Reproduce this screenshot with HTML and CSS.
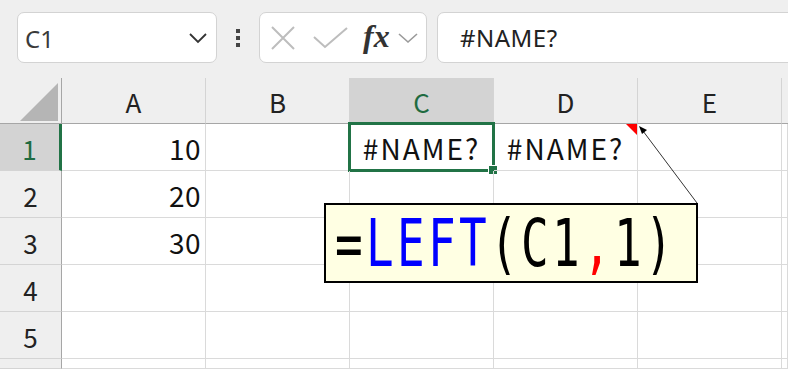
FILE: index.html
```html
<!DOCTYPE html>
<html>
	<head>
		<meta charset="UTF-8">
		<title>LEFT</title>
		<link rel="stylesheet" href="styles.css">
	</head>
	<body>
		<div class="toolbar">
			<div class="namebox">
				<span class="ref">C1</span>
				<svg class="chev" width="20" height="12" viewBox="0 0 20 12"><polyline points="2,2 10,10 18,2" fill="none" stroke="#333" stroke-width="1.8"/></svg>
			</div>
			<div class="dots"><i></i><i></i><i></i></div>
			<div class="fxbox">
				<svg class="ico-x" width="26" height="24" viewBox="0 0 26 24"><path d="M2 1 L24 23 M24 1 L2 23" stroke="#bdbdbd" stroke-width="2" fill="none"/></svg>
				<svg class="ico-ok" width="36" height="22" viewBox="0 0 36 22"><polyline points="1,10 12,20 34,1" stroke="#bdbdbd" stroke-width="2" fill="none"/></svg>
				<span class="fx">fx</span>
				<svg class="chev-s" width="20" height="11" viewBox="0 0 20 11"><polyline points="1,1 10,9 19,1" fill="none" stroke="#9a9a9a" stroke-width="1.6"/></svg>
			</div>
			<div class="formula">#NAME?</div>
		</div>

		<div class="sheet">
			<div class="corner"><svg width="40" height="40" viewBox="0 0 40 40"><polygon points="1,39 39,39 39,1" fill="#b5b5b5"/></svg></div>
			<div class="colhead">A</div>
			<div class="colhead">B</div>
			<div class="colhead active">C</div>
			<div class="colhead">D</div>
			<div class="colhead">E</div>
			<div class="colhead last"></div>

			<div class="rowhead active">1</div>
			<div class="cell num">10</div>
			<div class="cell"></div>
			<div class="cell err sel">#NAME?<span class="handle"></span></div>
			<div class="cell err note">#NAME?</div>
			<div class="cell"></div>
			<div class="cell"></div>

			<div class="rowhead">2</div>
			<div class="cell num">20</div>
			<div class="cell"></div>
			<div class="cell"></div>
			<div class="cell"></div>
			<div class="cell"></div>
			<div class="cell"></div>

			<div class="rowhead">3</div>
			<div class="cell num">30</div>
			<div class="cell"></div>
			<div class="cell"></div>
			<div class="cell"></div>
			<div class="cell"></div>
			<div class="cell"></div>

			<div class="rowhead">4</div>
			<div class="cell"></div>
			<div class="cell"></div>
			<div class="cell"></div>
			<div class="cell"></div>
			<div class="cell"></div>
			<div class="cell"></div>

			<div class="rowhead">5</div>
			<div class="cell"></div>
			<div class="cell"></div>
			<div class="cell"></div>
			<div class="cell"></div>
			<div class="cell"></div>
			<div class="cell"></div>

			<div class="rowhead"></div>
			<div class="cell"></div>
			<div class="cell"></div>
			<div class="cell"></div>
			<div class="cell"></div>
			<div class="cell"></div>
			<div class="cell"></div>
		</div>

		<!-- comment callout -->
		<svg class="arrow" width="788" height="369" viewBox="0 0 788 369">
			<line x1="697" y1="203" x2="643" y2="131" stroke="#333" stroke-width="1"/>
			<polygon points="639,126 647,130 642,134" fill="#000"/>
		</svg>
		<div class="callout">
			<span class="f-txt"><span class="k">=</span><span class="b">LEFT</span><span class="k">(C1</span><span class="r">,</span><span class="k">1)</span></span>
		</div>
	</body>
</html>
```

FILE: styles.css
```css
html,body{
	margin:0;
	padding:0;
}
body{
	width:788px;
	height:369px;
	overflow:hidden;
	background:#efefef;
	position:relative;
	font-family:"Noto Sans CJK JP","Noto Sans",sans-serif;
	color:#222;
}

/* formula bar */
.toolbar{
	height:78px;
	box-sizing:border-box;
	padding:12px 0 0 17px;
	display:flex;
	align-items:flex-start;
}
.namebox,.fxbox,.formula{
	height:51px;
	box-sizing:border-box;
	background:#fff;
	border:1px solid #d3d3d3;
	border-radius:7px;
	display:flex;
	align-items:center;
}
.namebox{
	width:200px;
	padding:0 8px 0 7px;
	justify-content:space-between;
}
.namebox .ref{
	font-family:"Noto Sans",sans-serif;
	font-size:24px;
	color:#3a3a3a;
	padding-top:2px;
}
.dots{
	width:42px;
	height:51px;
	display:flex;
	flex-direction:column;
	align-items:center;
	justify-content:center;
	gap:3px;
}
.dots i{
	display:block;
	width:4px;
	height:4px;
	background:#444;
}
.fxbox{
	width:168px;
	padding-left:10px;
}
.fxbox .ico-ok{
	margin-left:17px;
}
.fxbox .fx{
	font-family:"Liberation Serif",serif;
	font-style:italic;
	font-weight:bold;
	font-size:32px;
	color:#333;
	margin-left:14px;
	margin-top:-2px;
}
.fxbox .chev-s{
	margin-left:8px;
	margin-top:2px;
}
.formula{
	margin-left:10px;
	flex:1;
	margin-right:-30px;
	padding-left:22px;
	font-family:"Noto Sans",sans-serif;
	font-size:24px;
	color:#222;
	letter-spacing:0.5px;
}

/* grid */
.sheet{
	display:grid;
	grid-template-columns:62px 144px 144px 144px 144px 144px 1fr;
	grid-template-rows:46px 47px 47px 47px 47px 47px 10px;
	background:#fff;
}
.corner,.colhead,.rowhead{
	background:#efefef;
	box-sizing:border-box;
	display:flex;
	align-items:center;
	justify-content:center;
	font-size:26px;
	color:#222;
}
.corner{
	border-right:1px solid #a6a6a6;
	border-bottom:1px solid #a6a6a6;
	justify-content:flex-end;
	align-items:flex-end;
	padding:0 2px 1px 0;
}
.corner svg{
	display:block;
}
.colhead{
	border-right:1px solid #d4d4d4;
	border-bottom:1px solid #a6a6a6;
	padding-top:2px;
}
.colhead.last{
	border-right:none;
}
.rowhead{
	border-right:1px solid #a6a6a6;
	border-bottom:1px solid #d4d4d4;
	padding-top:2px;
}
.colhead.active,.rowhead.active{
	background:#d3d3d3;
	color:#1f6b41;
}
.rowhead.active{
	border-right:3px solid #217346;
}
.cell{
	box-sizing:border-box;
	border-right:1px solid #dadada;
	border-bottom:1px solid #dadada;
	font-size:28px;
	display:flex;
	align-items:center;
	position:relative;
	color:#111;
}
.cell.num{
	justify-content:flex-end;
	padding:2px 4px 0 0;
	letter-spacing:0.5px;
}
.cell.err{
	justify-content:center;
	padding-top:2px;
	letter-spacing:2px;
}
.cell.sel::before{
	content:"";
	position:absolute;
	left:-2px;
	top:-2px;
	right:-2px;
	bottom:-2px;
	border:3px solid #217346;
}
.cell .handle{
	position:absolute;
	right:-4px;
	bottom:-4px;
	width:8px;
	height:8px;
	background:#217346;
	border:1px solid #fff;
	box-sizing:content-box;
	margin:0 -1px -1px 0;
}
.cell.note::after{
	content:"";
	position:absolute;
	right:0;
	top:0;
	border-top:11px solid #f00;
	border-left:11px solid transparent;
}

/* comment */
.arrow{
	position:absolute;
	left:0;
	top:0;
	pointer-events:none;
}
.callout{
	position:absolute;
	left:324px;
	top:203px;
	width:374px;
	height:80px;
	box-sizing:border-box;
	border:2px solid #000;
	background:#ffffe3;
	padding-left:9px;
	line-height:76px;
	white-space:nowrap;
}
.f-txt{
	display:inline-block;
	font-family:"DejaVu Sans Mono",monospace;
	font-size:46px;
	letter-spacing:3.3px;
	transform:scaleY(1.45);
	transform-origin:50% 50%;
}
.f-txt .k{
	color:#000;
}
.f-txt .b{
	color:#0000ff;
}
.f-txt .r{
	color:#ff0000;
}
```
